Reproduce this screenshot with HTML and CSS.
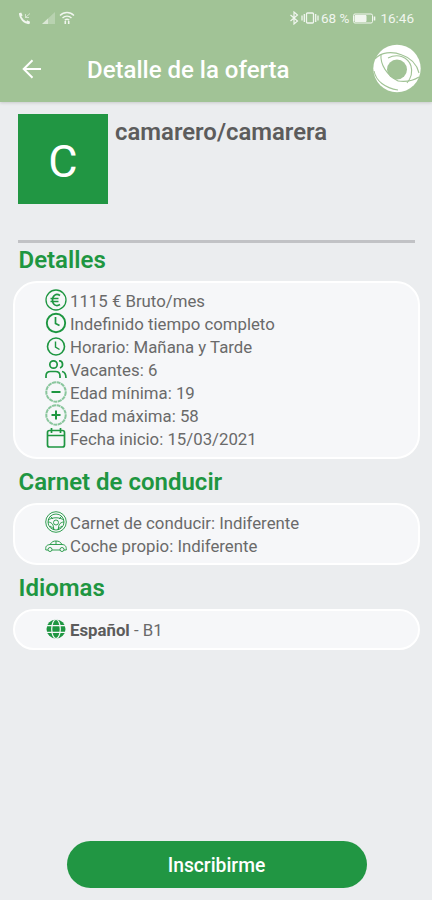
FILE: index.html
```html
<!DOCTYPE html>
<html lang="es">
<head>
  <meta charset="utf-8">
  <meta name="viewport" content="width=device-width, initial-scale=1">
  <title>Detalle de la oferta</title>
  <link rel="stylesheet" href="styles.css">
</head>
<body>
  <header class="header">
    <div class="statusbar">
      <svg class="call" width="15" height="15" viewBox="0 0 15 15" fill="none" stroke="#fff">
        <path d="M2 2.500c0 5 4 9.500 9.500 9.500" stroke-width="2"/>
        <path d="M2 2l1.500 3M8.500 10.500l3 1.500" stroke-width="2.600"/>
        <path d="M7.500 6.500l4.500-4M7.500 3v3.500h3.500" opacity=".65"/>
      </svg>
      <svg class="signal" width="14" height="14" viewBox="0 0 14 14" fill="#fff">
        <path d="M0 13L13 1v12z" opacity=".3"/>
        <path d="M0 13l6-5.500V13z" opacity=".6"/>
      </svg>
      <svg class="wifi" width="16" height="14" viewBox="0 0 16 14" fill="none" stroke="#fff" stroke-width="1.400">
        <path d="M1 4.500c4-4 10-4 14 0M3.500 7c2.500-2.500 6.500-2.500 9 0M5.800 9.300c1.300-1.300 3.100-1.300 4.400 0"/>
        <path d="M6.300 10v3M9.700 10v3" stroke-width="1.600"/>
      </svg>
      <div class="status-right">
        <svg width="10" height="14" viewBox="0 0 10 14" fill="none" stroke="#fff" stroke-width="1.200">
          <path d="M1.500 4l7 6L5 13V1l3.500 3-7 6"/>
        </svg>
        <svg class="vibrate" width="18" height="12" viewBox="0 0 18 12" fill="none" stroke="#fff" stroke-width="1.300">
          <rect x="5.500" y="1" width="7" height="10" rx="1"/>
          <path d="M3.300 2v8M1 3.500v5M14.700 2v8M17 3.500v5"/>
        </svg>
        <span class="percent">68 %</span>
        <svg class="battery" width="23" height="11" viewBox="0 0 23 11" fill="none" stroke="#fff">
          <rect x=".5" y="1" width="19" height="9" rx="1.500"/>
          <path d="M2 2.500h11v6H2z" fill="#fff"/>
          <path d="M21.500 3.500v4" stroke-width="1.600"/>
        </svg>
        <span class="clock">16:46</span>
      </div>
    </div>
    <div class="toolbar">
      <svg class="back" width="20" height="20" viewBox="0 0 20 20" fill="none" stroke="#fff" stroke-width="2">
        <path d="M19 10H2M10.500 1.200L1.700 10l8.800 8.800"/>
      </svg>
      <h1 class="title">Detalle de la oferta</h1>
      <svg class="logo" width="50" height="50" viewBox="0 0 50 50">
        <circle cx="25" cy="24.500" r="23.700" fill="#fff"/>
        <circle cx="25" cy="25.500" r="10" fill="#a1c396"/>
        <g fill="none" stroke="#a1c396" stroke-width="1.100">
          <path d="M3 15C9 8 20 7 30 11c9 3 15 10 17 18"/>
          <path d="M9 10c-1 11 6 21 17 27"/>
          <path d="M2 27c2 10 11 17 24 19"/>
          <path d="M26 37c8 1 15 0 21-4"/>
          <path d="M16 14c10-5 20-1 23 8 2 7 0 12-4 17"/>
        </g>
      </svg>
    </div>
  </header>

  <main class="content">
    <section class="offer">
      <div class="avatar">C</div>
      <h2 class="offer-name">camarero/camarera</h2>
    </section>

    <h3 class="heading">Detalles</h3>
    <ul class="card details">
      <li>
        <svg class="icon" viewBox="0 0 22 22"><circle cx="11" cy="11" r="10" stroke-width="1.300"/><path d="M15 6.500c-4-2.500-7.500 0-7.500 4.500s3.500 7 7.500 4.500M5.500 9.500h8M5.500 12.500h8" stroke-width="1.700"/></svg>
        <span>1115 € Bruto/mes</span>
      </li>
      <li>
        <svg class="icon" viewBox="0 0 22 22"><circle cx="11" cy="11" r="9.200" stroke-width="1.900"/><path d="M10.500 5v6.500l4 2" stroke-width="1.700"/></svg>
        <span>Indefinido tiempo completo</span>
      </li>
      <li>
        <svg class="icon" viewBox="0 0 22 22"><circle cx="11" cy="11.500" r="8.500" stroke-width="1.600"/><path d="M10.500 6.500V12l4 2.500" stroke-width="1.400"/></svg>
        <span>Horario: Mañana y Tarde</span>
      </li>
      <li>
        <svg class="icon" viewBox="0 0 22 22"><circle cx="8.500" cy="6.500" r="3.700"/><path d="M1 20v-2c0-3 2-4.500 4.500-4.500h5c3 0 4.500 2 4.500 4.500v2M14 3c4-.5 5 5.500 1 7M17 13.500c3 .5 4 2.500 4 6.500"/></svg>
        <span>Vacantes: 6</span>
      </li>
      <li>
        <svg class="icon" viewBox="0 0 22 22"><circle class="ring" cx="11" cy="11" r="9.700"/><path d="M6.500 11h9" stroke-width="2"/></svg>
        <span>Edad mínima: 19</span>
      </li>
      <li>
        <svg class="icon" viewBox="0 0 22 22"><circle class="ring" cx="11" cy="11" r="9.700"/><path d="M6.500 11h9M11 6.500v9" stroke-width="2"/></svg>
        <span>Edad máxima: 58</span>
      </li>
      <li>
        <svg class="icon" viewBox="0 0 22 22"><rect x="2.500" y="3.500" width="17" height="16.500" rx="2"/><path d="M2.500 8.500h17M6.500 1v5M15.500 1v5"/></svg>
        <span>Fecha inicio: 15/03/2021</span>
      </li>
    </ul>

    <h3 class="heading">Carnet de conducir</h3>
    <ul class="card licence">
      <li>
        <svg class="icon thin" viewBox="0 0 22 22"><circle cx="11" cy="11" r="10.300"/><circle cx="11" cy="11" r="8"/><path d="M3 9c5-3 11-3 16 0M3 11c2 0 4 1 5 3l1 5M19 11c-2 0-4 1-5 3l-1 5M5 5l3 3M17 5l-3 3M5 15l4 3M17 15l-4 3"/><circle cx="11" cy="11.500" r="2.500"/></svg>
        <span>Carnet de conducir: Indiferente</span>
      </li>
      <li>
        <svg class="icon thin" viewBox="0 0 22 22"><path d="M3 16H.8c-.5-4 1-5 4.200-5.500C7 7.500 8.500 7 11 7c3 0 4.500 1 6 3.500 3 .2 4.500 1.500 4.300 5.500H19M7 16h8M5 10.500h12M11 7v3.500"/><circle cx="5" cy="15.500" r="2"/><circle cx="17" cy="15.500" r="2"/></svg>
        <span>Coche propio: Indiferente</span>
      </li>
    </ul>

    <h3 class="heading">Idiomas</h3>
    <ul class="card languages">
      <li>
        <svg class="icon" viewBox="0 0 22 22"><circle cx="11" cy="11" r="9.500" fill="#1e9641" stroke="none"/><g stroke="#f6f7f9" stroke-width="1.200"><ellipse cx="11" cy="11" rx="4.300" ry="9.500"/><path d="M2 7.700h18M2 14.300h18"/></g></svg>
        <span><b>Español</b> - B1</span>
      </li>
    </ul>
  </main>

  <footer class="footer">
    <button class="submit" type="button">Inscribirme</button>
  </footer>
</body>
</html>
```
FILE: styles.css
```css
* {
  box-sizing: border-box;
}

body {
  margin: 0;
  height: 900px;
  display: flex;
  flex-direction: column;
  background: #ebedef;
  color: #5c5c5c;
  font-family: Roboto, sans-serif;
}

h1, h2, h3, ul {
  margin: 0;
  padding: 0;
}

svg {
  display: block;
  flex: none;
}

.header {
  height: 102px;
  background: #a1c396;
  color: #fff;
  box-shadow: 0 1px 3px rgba(0, 0, 0, .15);
}

.statusbar {
  height: 36px;
  padding: 0 18px;
  display: flex;
  align-items: center;
  opacity: .85;
}

.signal {
  margin-left: 9px;
}

.wifi {
  margin-left: 3px;
}

.status-right {
  margin-left: auto;
  display: flex;
  align-items: center;
  font-size: 13.500px;
}

.vibrate {
  margin-left: 2px;
}

.percent {
  margin-left: 2px;
}

.battery {
  margin: 0 4px;
}

.toolbar {
  height: 66px;
  padding: 0 10px 0 22px;
  display: flex;
  align-items: center;
}

.title {
  margin-left: 45px;
  padding-top: 1px;
  font-size: 24px;
  font-weight: 500;
}

.logo {
  margin-left: auto;
}

.content {
  flex: 1;
  padding: 12px 12px 0 13px;
}

.offer {
  display: flex;
  height: 129px;
  margin: 0 5px;
  border-bottom: 3px solid #c1c2c5;
}

.avatar {
  width: 90px;
  height: 90px;
  background: #219643;
  color: #fff;
  font-size: 45px;
  line-height: 96px;
  text-align: center;
}

.offer-name {
  margin: 4px 0 0 7px;
  font-size: 23.900px;
  line-height: 28px;
  font-weight: 600;
}

.heading {
  height: 38px;
  padding-left: 5.500px;
  color: #1e9641;
  font-size: 24px;
  line-height: 35px;
  font-weight: 600;
}

.card {
  list-style: none;
  padding: 6px 30px;
  background: #f6f7f9;
  border: 2px solid #fff;
  border-radius: 24px;
}

.card li {
  display: flex;
  align-items: center;
  gap: 3px;
  height: 23px;
  color: #6a6a6a;
  font-size: 16.800px;
}

.card b {
  color: #5c5c5c;
}

.details {
  height: 178px;
  margin-bottom: 6px;
}

.licence {
  height: 62px;
  margin-bottom: 6px;
}

.languages {
  height: 41px;
  padding-top: 7px;
  border-radius: 21px;
}

.icon {
  width: 22px;
  height: 22px;
  margin-top: -1px;
  fill: none;
  stroke: #1e9641;
  stroke-width: 1.700;
}

.thin {
  stroke-width: .9;
}

.ring {
  opacity: .5;
  stroke-width: 2;
  stroke-dasharray: 4 .6;
}

.footer {
  height: 59px;
  text-align: center;
}

.submit {
  width: 300px;
  height: 47px;
  margin-left: 1px;
  padding-top: 3px;
  border: 0;
  border-radius: 24px;
  background: #219643;
  color: #fff;
  font: 500 19.300px Roboto, sans-serif;
}
```
